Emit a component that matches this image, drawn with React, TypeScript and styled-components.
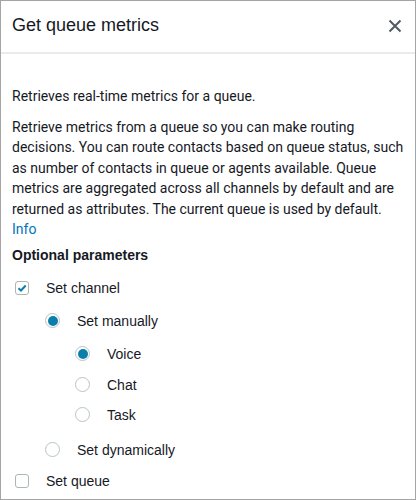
import styled, { createGlobalStyle } from "styled-components";

const GlobalStyle = createGlobalStyle`
  html, body {
    margin: 0;
    padding: 0;
    background: #ffffff;
  }
`;

const ACCENT = "#0b7fab";

const Panel = styled.div`
  box-sizing: border-box;
  width: 416px;
  height: 500px;
  border: 1px solid #a4a4a4;
  background: #ffffff;
  display: flex;
  flex-direction: column;
  overflow: hidden;
`;

const Header = styled.div`
  flex-shrink: 0;
  display: flex;
  flex-direction: row;
  justify-content: space-between;
  align-items: center;
  height: 51px;
  padding: 0 12px 0 11px;
  border-bottom: 2px solid #e9ebed;
`;

const Title = styled.div`
  font-family: "Liberation Sans", Arial, sans-serif;
  font-size: 18px;
  color: #16191f;
  margin-top: -2px;
`;

const CloseButton = styled.button`
  border: none;
  background: none;
  padding: 0;
  margin-top: -2px;
  width: 16px;
  height: 16px;
  display: flex;
  align-items: center;
  justify-content: center;
  cursor: pointer;
`;

const Body = styled.div`
  flex-shrink: 0;
  padding: 32px 4px 0 11px;
  display: flex;
  flex-direction: column;
`;

const Text = styled.p`
  margin: 0;
  font-family: Roboto, "Liberation Sans", sans-serif;
  font-size: 14px;
  line-height: 20.5px;
  color: #16191f;
  & + & {
    margin-top: 10px;
  }
`;

const InfoLink = styled.a`
  color: #0073bb;
  text-decoration: none;
`;

const SectionTitle = styled.div`
  margin-top: 5px;
  font-family: "Liberation Sans", Arial, sans-serif;
  font-weight: 700;
  font-size: 14px;
  line-height: 20px;
  color: #16191f;
`;

const Row = styled.div<{ $level: number; $mt: number }>`
  display: flex;
  flex-direction: row;
  align-items: center;
  height: 20px;
  margin-top: ${(p) => p.$mt}px;
  padding-left: ${(p) => 3 + p.$level * 30}px;
  gap: 17px;
`;

const Label = styled.span`
  font-family: "Liberation Sans", Arial, sans-serif;
  font-size: 14px;
  color: #16191f;
`;

const CheckBox = styled.span`
  box-sizing: border-box;
  width: 14px;
  height: 14px;
  border: 1px solid #aab7b8;
  border-radius: 3px;
  display: flex;
  align-items: center;
  justify-content: center;
  background: #ffffff;
`;

const Radio = styled.span<{ $checked: boolean }>`
  box-sizing: border-box;
  width: 15px;
  height: 15px;
  border-radius: 50%;
  border: 1px solid #b9c4c5;
  background: #ffffff;
  display: flex;
  align-items: center;
  justify-content: center;
  &::after {
    content: "";
    display: ${(p) => (p.$checked ? "block" : "none")};
    width: 10px;
    height: 10px;
    border-radius: 50%;
    background: ${ACCENT};
  }
`;

const options = [
  { kind: "check", label: "Set channel", level: 0, checked: true, mt: 13 },
  { kind: "radio", label: "Set manually", level: 1, checked: true, mt: 13 },
  { kind: "radio", label: "Voice", level: 2, checked: true, mt: 13 },
  { kind: "radio", label: "Chat", level: 2, checked: false, mt: 11 },
  { kind: "radio", label: "Task", level: 2, checked: false, mt: 10 },
  { kind: "radio", label: "Set dynamically", level: 1, checked: false, mt: 15 },
  { kind: "check", label: "Set queue", level: 0, checked: false, mt: 11 },
];

const App = () => {
  return (
    <>
      <GlobalStyle />
      <Panel>
        <Header>
          <Title>Get queue metrics</Title>
          <CloseButton aria-label="close">
            <svg width="14" height="14" viewBox="0 0 14 14">
              <path
                d="M1.5 1.5 L12.5 12.5 M12.5 1.5 L1.5 12.5"
                stroke="#545b64"
                strokeWidth="2"
                fill="none"
              />
            </svg>
          </CloseButton>
        </Header>
        <Body>
          <Text>Retrieves real-time metrics for a queue.</Text>
          <Text>
            Retrieve metrics from a queue so you can make routing decisions.
            You can route contacts based on queue status, such as number of
            contacts in queue or agents available. Queue metrics are aggregated
            across all channels by default and are returned as attributes. The
            current queue is used by default.
            <br />
            <InfoLink href="#">Info</InfoLink>
          </Text>
          <SectionTitle>Optional parameters</SectionTitle>
          {options.map((o) => (
            <Row key={o.label} $level={o.level} $mt={o.mt}>
              {o.kind === "check" ? (
                <CheckBox>
                  {o.checked && (
                    <svg width="10" height="10" viewBox="0 0 10 10">
                      <path
                        d="M1.5 5.2 L4 7.5 L8.7 2.5"
                        stroke={ACCENT}
                        strokeWidth="2"
                        fill="none"
                      />
                    </svg>
                  )}
                </CheckBox>
              ) : (
                <Radio $checked={o.checked} />
              )}
              <Label>{o.label}</Label>
            </Row>
          ))}
        </Body>
      </Panel>
    </>
  );
};

export default App;
